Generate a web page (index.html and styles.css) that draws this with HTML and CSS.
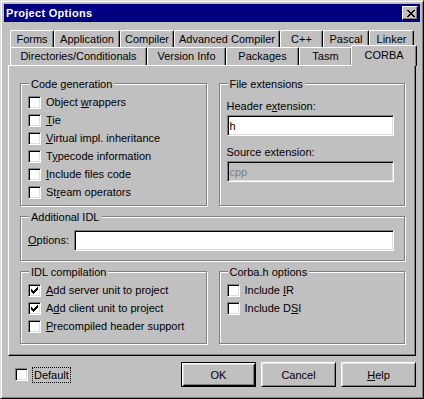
FILE: index.html
```html
<!DOCTYPE html>
<html lang="en">
<head>
    <meta charset="UTF-8">
    <title>Project Options</title>
    <link rel="stylesheet" href="styles.css">
</head>
<body>
    <div class="window">
        <div class="title-bar">
            <span class="title-text">Project Options</span>
            <button type="button" class="close-btn">
                <svg width="8" height="7" viewBox="0 0 8 7" shape-rendering="crispEdges"><path d="M0 0h2v1h-2z M6 0h2v1h-2z M1 1h2v1h-2z M5 1h2v1h-2z M2 2h4v1h-4z M3 3h2v1h-2z M2 4h4v1h-4z M1 5h2v1h-2z M5 5h2v1h-2z M0 6h2v1h-2z M6 6h2v1h-2z" fill="#000"/></svg>
            </button>
        </div>

        <div class="tabs">
            <div class="tab-row back">
                <div class="tab">Forms</div>
                <div class="tab">Application</div>
                <div class="tab">Compiler</div>
                <div class="tab">Advanced Compiler</div>
                <div class="tab">C++</div>
                <div class="tab">Pascal</div>
                <div class="tab">Linker</div>
            </div>
            <div class="tab-row front">
                <div class="tab">Directories/Conditionals</div>
                <div class="tab">Version Info</div>
                <div class="tab">Packages</div>
                <div class="tab">Tasm</div>
                <div class="tab active">CORBA</div>
            </div>
        </div>

        <div class="page">
            <div class="row-top">
                <div class="group codegen">
                    <span class="legend">Code generation</span>
                    <div class="check-row"><span class="check"></span><span>Object <u>w</u>rappers</span></div>
                    <div class="check-row"><span class="check"></span><span><u>T</u>ie</span></div>
                    <div class="check-row"><span class="check"></span><span><u>V</u>irtual impl. inheritance</span></div>
                    <div class="check-row"><span class="check"></span><span>T<u>y</u>pecode information</span></div>
                    <div class="check-row"><span class="check"></span><span><u>I</u>nclude files code</span></div>
                    <div class="check-row"><span class="check"></span><span>St<u>r</u>eam operators</span></div>
                </div>
                <div class="group fileext">
                    <span class="legend">File extensions</span>
                    <div class="field-label">Header e<u>x</u>tension:</div>
                    <input type="text" class="edit" value="h">
                    <div class="field-label">Source extension:</div>
                    <input type="text" class="edit" value="cpp" disabled>
                </div>
            </div>

            <div class="group idl">
                <span class="legend">Additional IDL</span>
                <span class="options-label"><u>O</u>ptions:</span>
                <input type="text" class="edit" value="">
            </div>

            <div class="row-bottom">
                <div class="group checks">
                    <span class="legend">IDL compilation</span>
                    <div class="check-row"><span class="check checked"><svg width="7" height="7" viewBox="0 0 7 7" shape-rendering="crispEdges"><path d="M6 0h1v1h-1z M5 1h2v1h-2z M0 2h1v1h-1z M4 2h3v1h-3z M0 3h2v1h-2z M3 3h3v1h-3z M0 4h5v1h-5z M1 5h3v1h-3z M2 6h1v1h-1z" fill="#000"/></svg></span><span><u>A</u>dd server unit to project</span></div>
                    <div class="check-row"><span class="check checked"><svg width="7" height="7" viewBox="0 0 7 7" shape-rendering="crispEdges"><path d="M6 0h1v1h-1z M5 1h2v1h-2z M0 2h1v1h-1z M4 2h3v1h-3z M0 3h2v1h-2z M3 3h3v1h-3z M0 4h5v1h-5z M1 5h3v1h-3z M2 6h1v1h-1z" fill="#000"/></svg></span><span>A<u>d</u>d client unit to project</span></div>
                    <div class="check-row"><span class="check"></span><span><u>P</u>recompiled header support</span></div>
                </div>
                <div class="group checks">
                    <span class="legend">Corba.h options</span>
                    <div class="check-row"><span class="check"></span><span>Include <u>I</u>R</span></div>
                    <div class="check-row"><span class="check"></span><span>Include D<u>S</u>I</span></div>
                </div>
            </div>
        </div>

        <div class="footer">
            <span class="check"></span>
            <span class="focus-label">Default</span>
            <div class="buttons">
                <button type="button" class="btn default">OK</button>
                <button type="button" class="btn">Cancel</button>
                <button type="button" class="btn"><u>H</u>elp</button>
            </div>
        </div>
    </div>
</body>
</html>
```

FILE: styles.css
```css
:root {
    --face: #c0c0c0;
    --light: #dfdfdf;
    --shadow: #808080;
    --title: #000080;
}

body {
    margin: 0;
    background-color: var(--face);
    font-family: 'Liberation Sans', Arial, sans-serif;
    font-size: 11px;
    color: #000;
}

u {
    text-decoration: underline;
    text-underline-offset: 1px;
}

.window {
    width: 424px;
    height: 399px;
    box-sizing: border-box;
    padding: 3px;
    background-color: var(--face);
    border: 1px solid;
    border-color: var(--light) #000 #000 var(--light);
    box-shadow: inset 1px 1px #fff, inset -1px -1px var(--shadow);
}

.title-bar {
    height: 18px;
    background-color: var(--title);
    display: flex;
    align-items: flex-start;
    justify-content: space-between;
}

.title-text {
    color: #fff;
    font-weight: bold;
    line-height: 18px;
    padding-left: 2px;
    letter-spacing: 0.3px;
}

.close-btn {
    width: 16px;
    height: 14px;
    margin: 2px 2px 0 0;
    padding: 0 0 0 1px;
    box-sizing: border-box;
    background-color: var(--face);
    border: 1px solid;
    border-color: #fff #000 #000 #fff;
    box-shadow: inset -1px -1px var(--shadow);
    display: flex;
    align-items: center;
    justify-content: center;
}

.close-btn svg {
    display: block;
}

/* tabs */
.tabs {
    margin: 8px 4px 0;
}

.tab-row {
    display: flex;
    padding: 0 2px;
}

.tab-row.back {
    height: 17px;
}

.tab-row.front {
    height: 18px;
}

.tab {
    flex: none;
    box-sizing: border-box;
    height: 100%;
    padding: 1px 0 0;
    line-height: 14px;
    text-align: center;
    white-space: nowrap;
    background-color: var(--face);
    border-top: 1px solid #fff;
    border-left: 1px solid #fff;
    border-right: 1px solid #000;
    border-radius: 2px 2px 0 0;
    box-shadow: inset -1px 0 var(--shadow);
}

.back .tab:nth-child(1) { width: 44px; }
.back .tab:nth-child(2) { width: 66px; }
.back .tab:nth-child(3) { width: 54px; }
.back .tab:nth-child(4) { width: 106px; }
.back .tab:nth-child(5) { width: 43px; }
.back .tab:nth-child(6) { width: 46px; }
.back .tab:nth-child(7) { width: 45px; }

.front .tab:nth-child(1) { width: 137px; }
.front .tab:nth-child(2) { width: 79px; }
.front .tab:nth-child(3) { width: 73px; }
.front .tab:nth-child(4) { width: 53px; }

.tab.active {
    position: relative;
    z-index: 1;
    align-self: flex-start;
    width: 66px;
    height: 21px;
    margin: -2px 0 0 -1px;
    padding-top: 2px;
}

/* page */
.page {
    height: 291px;
    box-sizing: border-box;
    margin: 0 4px;
    padding: 17px 10px 0 11px;
    border: 1px solid;
    border-color: #fff #000 #000 #fff;
    box-shadow: inset -1px -1px var(--shadow);
    display: flex;
    flex-direction: column;
    gap: 10px;
}

.row-top,
.row-bottom {
    display: grid;
    grid-template-columns: 1fr 1fr;
    column-gap: 12px;
}

.row-top {
    height: 123px;
}

.row-bottom {
    height: 73px;
}

.group {
    position: relative;
    box-sizing: border-box;
    border: 1px solid var(--shadow);
    box-shadow: inset 1px 1px #fff, 1px 1px #fff;
}

.legend {
    position: absolute;
    top: -6px;
    left: 8px;
    padding: 0 2px;
    line-height: 13px;
    background-color: var(--face);
    white-space: nowrap;
}

.codegen,
.checks {
    padding: 10px 7px 0;
}

.check-row {
    display: flex;
    align-items: flex-start;
    height: 18px;
    line-height: 13px;
    white-space: nowrap;
}

.check-row .check {
    margin-top: 2px;
    margin-right: 5px;
}

.check-row span:last-child {
    padding-top: 2px;
}

.check {
    flex: none;
    width: 13px;
    height: 13px;
    box-sizing: border-box;
    background-color: #fff;
    border: 1px solid;
    border-color: var(--shadow) #fff #fff var(--shadow);
    box-shadow: inset 1px 1px #000, inset -1px -1px var(--light);
    display: flex;
    align-items: center;
    justify-content: center;
}

.check svg {
    display: block;
}

.fileext {
    padding: 16px 10px 0 7px;
}

.field-label {
    line-height: 13px;
    margin-bottom: 2px;
    white-space: nowrap;
}

.edit {
    display: block;
    width: 100%;
    height: 21px;
    box-sizing: border-box;
    margin: 0 0 10px;
    padding: 0 2px;
    font-family: 'Liberation Sans', Arial, sans-serif;
    font-size: 11px;
    color: #000;
    background-color: #fff;
    border: 1px solid;
    border-color: var(--shadow) #fff #fff var(--shadow);
    box-shadow: inset 1px 1px #000, inset -1px -1px var(--light);
    outline: none;
}

.edit:disabled {
    background-color: var(--face);
    color: var(--shadow);
}

.idl {
    height: 45px;
    padding: 13px 10px 0 7px;
    display: flex;
    align-items: flex-start;
}

.options-label {
    flex: none;
    width: 46px;
    line-height: 21px;
}

.idl .edit {
    flex: 1;
    margin: 0;
}

/* footer */
.footer {
    display: flex;
    align-items: center;
    height: 25px;
    margin: 6px 4px 0;
}

.footer .check {
    margin-left: 7px;
}

.focus-label {
    margin-left: 4px;
    padding: 1px 2px;
    line-height: 14px;
    outline: 1px dotted #000;
    outline-offset: -1px;
}

.buttons {
    margin-left: auto;
    display: flex;
    gap: 5px;
}

.btn {
    width: 75px;
    height: 25px;
    box-sizing: border-box;
    padding: 0;
    font-family: 'Liberation Sans', Arial, sans-serif;
    font-size: 11px;
    color: #000;
    background-color: var(--face);
    border: 1px solid;
    border-color: #fff #000 #000 #fff;
    box-shadow: inset 1px 1px var(--light), inset -1px -1px var(--shadow);
}

.btn.default {
    border-color: #000;
    box-shadow: inset 1px 1px #fff, inset -1px -1px #000, inset 2px 2px var(--light), inset -2px -2px var(--shadow);
}
```
